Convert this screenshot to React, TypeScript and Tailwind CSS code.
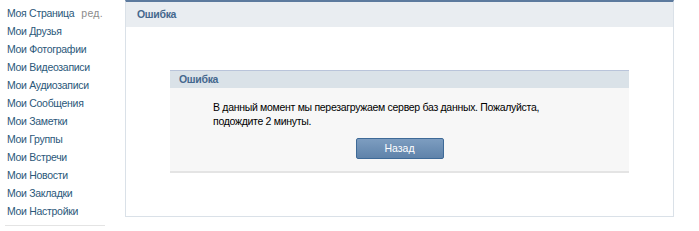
import React from "react";

const NAV = [
  "Моя Страница",
  "Мои Друзья",
  "Мои Фотографии",
  "Мои Видеозаписи",
  "Мои Аудиозаписи",
  "Мои Сообщения",
  "Мои Заметки",
  "Мои Группы",
  "Мои Встречи",
  "Мои Новости",
  "Мои Закладки",
  "Мои Настройки",
];

export default function App() {
  return (
    <div
      className="flex h-[231px] w-[699px] bg-white text-[10.5px] tracking-[-0.3px] text-[#000]"
      style={{ fontFamily: "'Liberation Sans', Tahoma, Arial, sans-serif" }}
    >
      <aside className="w-[125px] shrink-0 pl-[7px] pt-[5px]">
        <ul>
          {NAV.map((n, i) => (
            <li key={n} className="flex h-[18px] items-center whitespace-nowrap text-[#2b587a]">
              <span>{n}</span>
              {i === 0 && <span className="ml-[7px] tracking-[0.3px] text-[#8c8c8c]">ред.</span>}
            </li>
          ))}
        </ul>
        <div className="ml-[-2px] mt-[4px] h-px w-[100px] bg-[#e4e4e4]" />
      </aside>

      <main className="flex h-[217px] w-[549px] shrink-0 flex-col border-x border-b border-[#dae1e8] border-t-2 border-t-[#5c7a9e]">
        <div className="flex h-[25px] items-center bg-[#e9edf1] pl-[11px] font-bold text-[#45688e]">
          Ошибка
        </div>
        <div className="px-[44px] pt-[43px]">
          <div className="w-[459px] border-b-2 border-[#e4e4e4] bg-[#f7f7f7]">
            <div className="flex h-[18px] items-center border-t border-[#b9c4da] bg-[#dae2e8] pl-[9px] font-bold text-[#45688e]">
              Ошибка
            </div>
            <div className="px-[43px] pb-[12px] pt-[12px]">
              <p className="whitespace-nowrap leading-[14px] text-[#000]">
                В данный момент мы перезагружаем сервер баз данных. Пожалуйста,
                <br />
                подождите 2 минуты.
              </p>
              <div className="mt-[10px] flex justify-center">
                <button className="h-[21px] w-[88px] rounded-[2px] border border-[#3e6a97] bg-gradient-to-b from-[#7d9dc0] to-[#5f83aa] tracking-normal text-white">
                  Назад
                </button>
              </div>
            </div>
          </div>
        </div>
      </main>
    </div>
  );
}
